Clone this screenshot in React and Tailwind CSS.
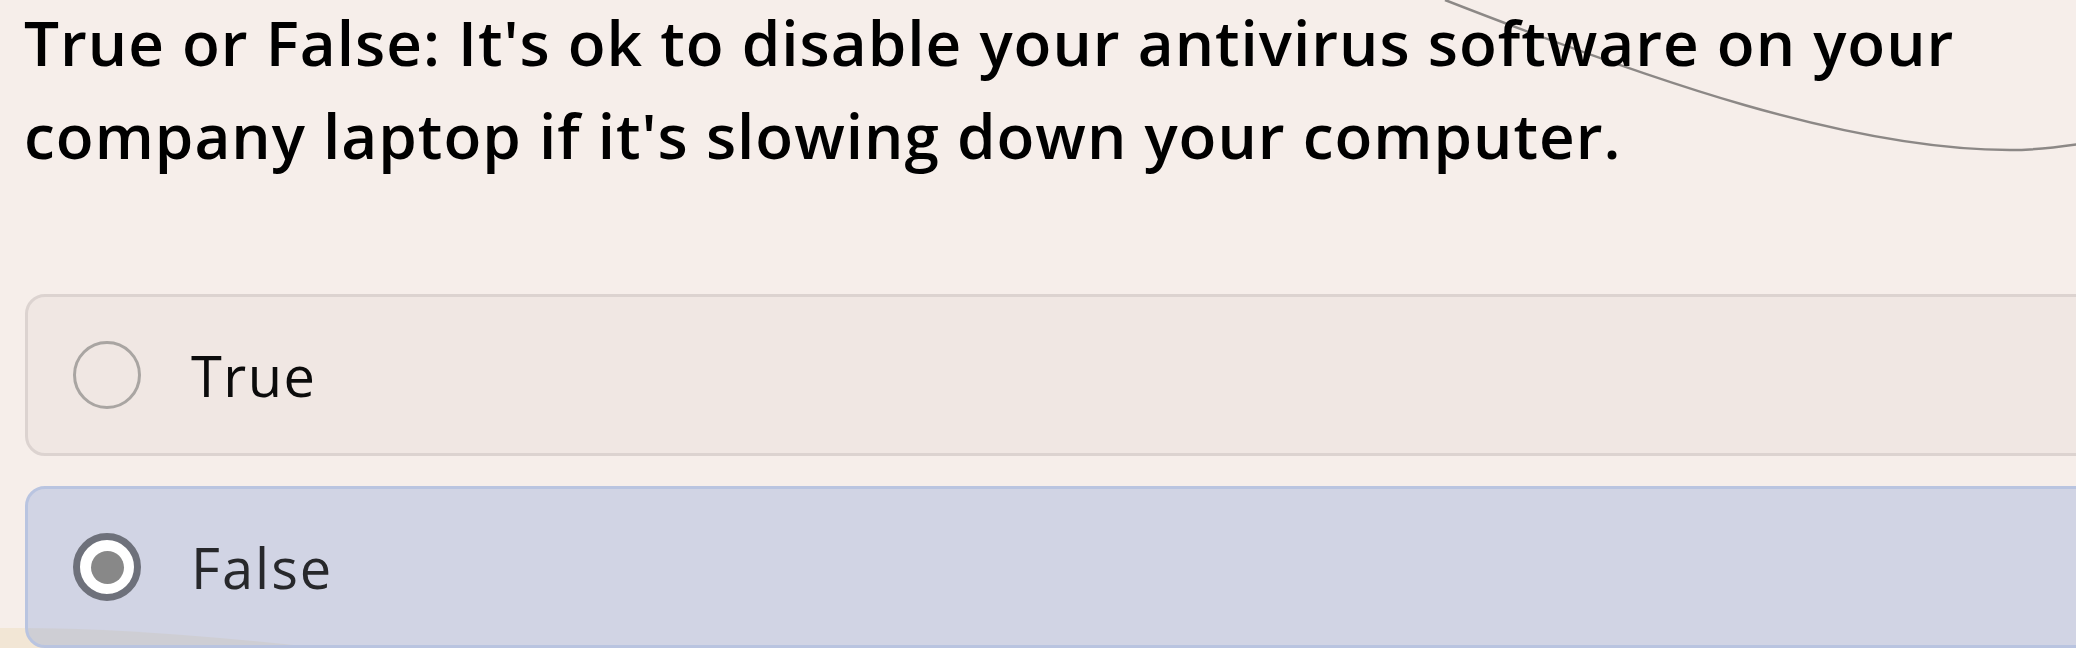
export default function App() {
  return (
    <div className="relative w-[2076px] h-[648px] overflow-hidden bg-[#f6eeea] font-['Open_Sans',sans-serif]">
      {/* decorative blob + line */}
      <svg
        className="absolute inset-0 pointer-events-none"
        width="2076"
        height="648"
        viewBox="0 0 2076 648"
        aria-hidden="true"
      >
        <path d="M0 628 Q 160 626 420 660 L 0 660 Z" fill="#f2e6d5" />
        <path
          d="M1445 0 C 1650 80, 1850 150, 2010 150 C 2040 150, 2060 147, 2080 144"
          fill="none"
          stroke="#8c8886"
          strokeWidth="2.5"
        />
      </svg>

      <div className="relative pl-6">
        <h1 className="-mt-1 max-w-[1990px] text-[62px] leading-[93px] font-semibold tracking-[1px] text-black">
          True or False: It's ok to disable your antivirus software on your company laptop if it's slowing down your computer.
        </h1>

        <div className="mt-[112px] flex flex-col gap-[30px] pl-px">
          <div className="flex h-[162px] w-[2120px] items-center gap-[50px] rounded-[20px] border-[3px] border-[#dcd3d0] bg-[#f0e7e3] pl-[45px]">
            <span className="h-[68px] w-[68px] shrink-0 rounded-full border-[3px] border-[#a9a5a2]" />
            <span className="text-[56px] tracking-[1.5px] text-[#0b0b0b]">True</span>
          </div>

          <div className="flex h-[162px] w-[2120px] items-center gap-[50px] rounded-[20px] border-[3px] border-[#b9c4e0] bg-[rgba(98,134,213,0.25)] pl-[45px]">
            <span className="flex h-[68px] w-[68px] shrink-0 items-center justify-center rounded-full border-[7px] border-[#6e717b] bg-white">
              <span className="h-[33px] w-[33px] rounded-full bg-[#888888]" />
            </span>
            <span className="text-[56px] tracking-[2px] text-[#27282b]">False</span>
          </div>
        </div>
      </div>
    </div>
  );
}
